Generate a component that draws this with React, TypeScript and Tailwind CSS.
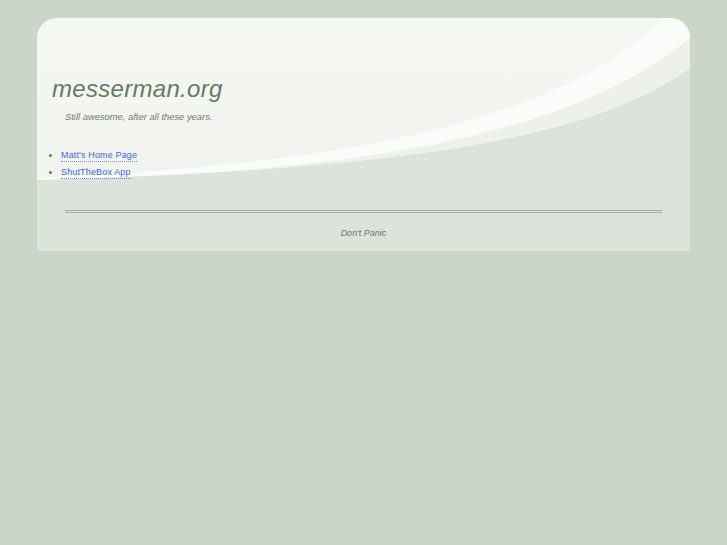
import React from 'react';

const links = [
  { label: "Matt's Home Page", href: '#' },
  { label: 'ShutTheBox App', href: '#' },
];

// the swoosh drawn behind the header
const Swoosh = () => (
  <svg
    className="absolute inset-0 h-full w-full"
    viewBox="0 0 653 233"
    preserveAspectRatio="none"
  >
    <defs>
      <linearGradient id="top" x1="0" y1="0" x2="0" y2="1">
        <stop offset="0" stopColor="#f5f7f2" />
        <stop offset="1" stopColor="#f1f4ee" />
      </linearGradient>
    </defs>
    <rect width="653" height="233" fill="#dce3db" />
    <path d="M0,0 H653 V50 C560,115 400,150 0,162 Z" fill="url(#top)" />
    <path d="M625,0 H653 V50 C560,115 400,150 0,162 L0,160 C350,145 540,90 625,0 Z" fill="#fafcf9" />
    <path d="M653,20 C560,95 400,155 0,161.5 L0,162 C400,150 560,115 653,50 Z" fill="#edf1ea" />
  </svg>
);

export default function App() {
  return (
    <div className="min-h-[545px] bg-[#cbd5c8] pt-[18px]" style={{ fontFamily: '"Liberation Sans", Arial, sans-serif' }}>
      <div className="relative mx-auto w-[653px] overflow-hidden rounded-t-[20px]">
        <Swoosh />
        <div className="relative pt-[59px] pb-[13px]">
          <h1 className="pl-[15px] text-[24px] leading-[24px] tracking-[0.3px] italic text-[#667a60]">messerman.org</h1>
          <p className="mt-[11px] pl-[28px] text-[9.4px] leading-[10px] italic text-[#707c6c]">
            Still awesome, after all these years.
          </p>

          <ul className="mt-[25px]">
            {links.map(link => (
              <li key={link.label} className="flex h-[17px] items-center">
                <span className="ml-[12px] h-[3px] w-[3px] rounded-full bg-[#6b7b66]" />
                <a
                  href={link.href}
                  className="ml-[9px] border-b border-dotted border-[#6a86e6] text-[9px] leading-[11px] tracking-[0.15px] text-[#4466dd]"
                >
                  {link.label}
                </a>
              </li>
            ))}
          </ul>

          <div className="mx-[28px] mt-[29px] h-[3px] border-y border-[#a5b4a0]" />

          <p className="mt-[16px] text-center text-[9px] leading-[9px] italic text-[#6c7768]">Don't Panic</p>
        </div>
      </div>
    </div>
  );
}
